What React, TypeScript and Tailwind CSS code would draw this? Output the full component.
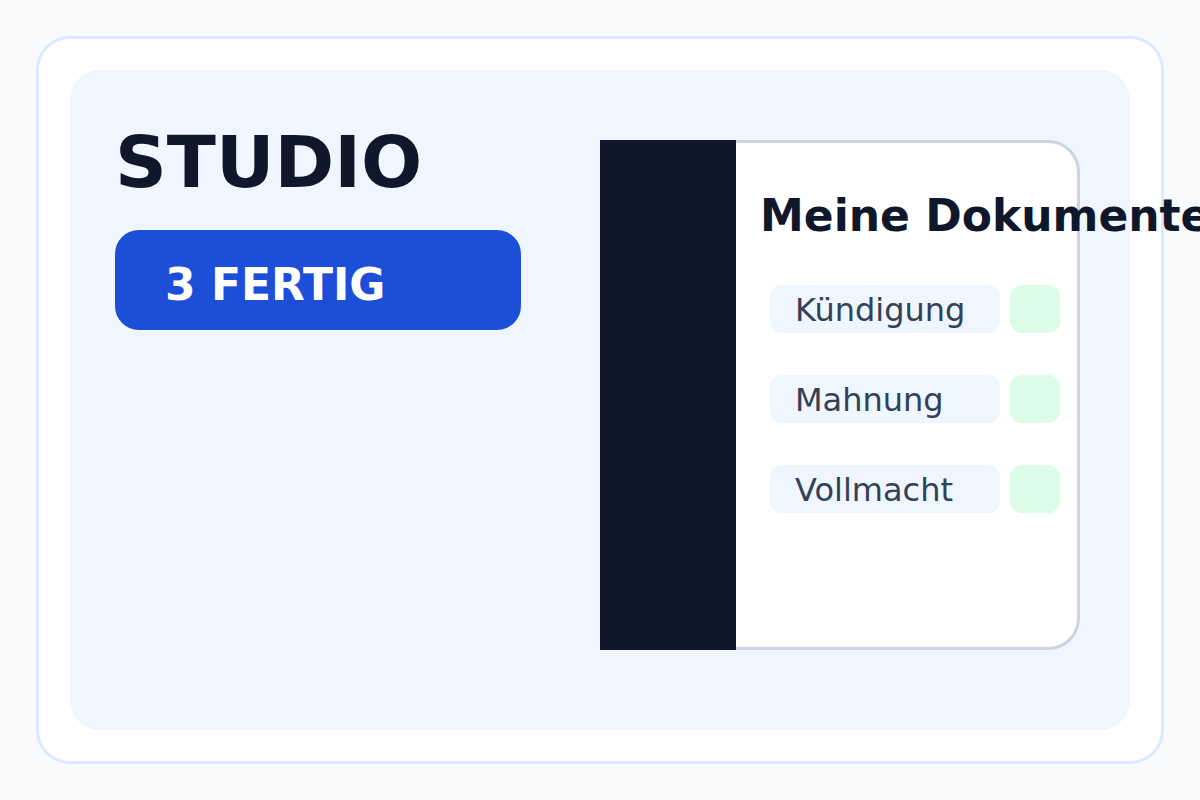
import React from "react";

const rows = ["Kündigung", "Mahnung", "Vollmacht"];

export default function App() {
  return (
    <div
      className="w-[1200px] h-[800px] overflow-hidden bg-[#f8fafc] p-[36px]"
      style={{ fontFamily: '"DejaVu Sans", Verdana, sans-serif' }}
    >
      <div className="w-full h-full rounded-[34px] border-[3px] border-[#dbeafe] bg-white p-[31px]">
        <div className="w-full h-full rounded-[30px] bg-[#eff6ff] flex items-start pl-[45px] pr-[50px]">
          <div className="flex flex-col pt-[56px]">
            <div className="text-[72px] leading-none font-bold text-[#0f172a] whitespace-nowrap">
              STUDIO
            </div>
            <div className="mt-[32px] w-[406px] h-[100px] rounded-[24px] bg-[#1d4ed8] flex items-center pl-[50px] pt-[10px]">
              <span className="text-[44px] leading-none font-bold text-white whitespace-nowrap">
                3 FERTIG
              </span>
            </div>
          </div>
          <div className="ml-auto mt-[70px] w-[480px] h-[510px] rounded-[32px] border-[3px] border-[#cbd5e1] bg-white flex">
            <div className="-my-[3px] -ml-[3px] w-[136px] shrink-0 bg-[#0f172a]" />
            <div className="flex flex-col pt-[51px] pl-[24px]">
              <div className="text-[44px] leading-none font-bold text-[#0f172a] whitespace-nowrap">
                Meine Dokumente
              </div>
              <div className="mt-[47px] ml-[10px] flex flex-col gap-[42px]">
                {rows.map((r) => (
                  <div key={r} className="flex gap-[10px]">
                    <div className="w-[230px] h-[48px] rounded-[12px] bg-[#eff6ff] flex items-center pl-[25px] pt-[2px]">
                      <span className="text-[32px] leading-none text-[#334155] whitespace-nowrap">
                        {r}
                      </span>
                    </div>
                    <div className="w-[50px] h-[48px] rounded-[12px] bg-[#dcfce7]" />
                  </div>
                ))}
              </div>
            </div>
          </div>
        </div>
      </div>
    </div>
  );
}
